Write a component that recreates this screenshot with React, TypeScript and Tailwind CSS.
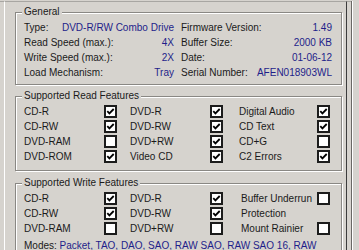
const GENERAL = [
    ["Type:", "DVD-R/RW Combo Drive", "Firmware Version:", "1.49"],
    ["Read Speed (max.):", "4X", "Buffer Size:", "2000 KB"],
    ["Write Speed (max.):", "2X", "Date:", "01-06-12"],
    ["Load Mechanism:", "Tray", "Serial Number:", "AFEN018903WL"],
];

const READ: [string, boolean, string, boolean, string, boolean][] = [
    ["CD-R", true, "DVD-R", true, "Digital Audio", true],
    ["CD-RW", true, "DVD-RW", true, "CD Text", true],
    ["DVD-RAM", false, "DVD+RW", true, "CD+G", false],
    ["DVD-ROM", true, "Video CD", true, "C2 Errors", true],
];

function Check({ on }: { on: boolean }) {
    return (
        <span className="flex h-[13px] w-[13px] items-center justify-center border-2 border-[#1c1c1c] bg-white">
            {on && (
                <svg width="9" height="9" viewBox="0 0 9 9">
                    <polyline points="1.3,4.2 3.4,6.4 7.7,2" fill="none" stroke="#000" strokeWidth="1.8" />
                </svg>
            )}
        </span>
    );
}

function Group({ title, className, children }: { title: string; className?: string; children: React.ReactNode }) {
    return (
        <fieldset
            className={`ml-[10px] w-[327px] border border-[#8a8884] pl-[8px] pt-[1px] shadow-[inset_1px_1px_0_#ffffff,1px_1px_0_#ffffff] ${className ?? ""}`}
        >
            <legend className="ml-[-2px] bg-[#d6d3ce] px-[2px] leading-[14px]">{title}</legend>
            {children}
        </fieldset>
    );
}

export default function App() {
    return (
        <div className="h-[250px] w-[359px] overflow-hidden bg-[#d6d3ce] pt-[1px] text-[10px] text-[#1a1a1a] [font-family:'Liberation_Sans',Arial,sans-serif]">
            <div className="flex h-full">
                <div className="w-[4px] border-t border-[#a8a6a2]" />
                <div className="h-full w-[343px] border-l border-r border-t border-l-white border-r-[#3c3c3c] border-t-[#a8a6a2] pt-[3px]">
                    <Group title="General" className="pb-[4px]">
                        {GENERAL.map(([l1, v1, l2, v2]) => (
                            <div key={l1} className="grid h-[15px] grid-cols-[150px_151px] gap-x-[7px] leading-[15px]">
                                <div className="flex justify-between">
                                    <span>{l1}</span>
                                    <span className="text-[#1e1e8a]">{v1}</span>
                                </div>
                                <div className="flex justify-between">
                                    <span>{l2}</span>
                                    <span className="text-[#1e1e8a]">{v2}</span>
                                </div>
                            </div>
                        ))}
                    </Group>

                    <Group title="Supported Read Features" className="mt-[4px] pb-[6px]">
                        {READ.map((row) => (
                            <div key={row[0]} className="grid h-[15px] grid-cols-[80px_26px_80px_29px_78px_13px] items-center leading-[15px]">
                                <span>{row[0]}</span>
                                <Check on={row[1]} />
                                <span>{row[2]}</span>
                                <Check on={row[3]} />
                                <span>{row[4]}</span>
                                <Check on={row[5]} />
                            </div>
                        ))}
                    </Group>

                    <Group title="Supported Write Features" className="mt-[5px]">
                        <div className="grid grid-cols-[80px_26px_80px_29px_78px_13px] grid-rows-[15px_15px_15px] items-center leading-[15px]">
                            <span>CD-R</span>
                            <Check on />
                            <span>DVD-R</span>
                            <Check on />
                            <span className="row-span-2 self-start pl-[2px] leading-[15px]">
                                Buffer Underrun
                                <br />
                                Protection
                            </span>
                            <Check on={false} />
                            <span>CD-RW</span>
                            <Check on />
                            <span>DVD-RW</span>
                            <Check on />
                            <span />
                            <span>DVD-RAM</span>
                            <Check on={false} />
                            <span>DVD+RW</span>
                            <Check on={false} />
                            <span className="pl-[2px]">Mount Rainier</span>
                            <Check on={false} />
                        </div>
                        <div className="mt-[2px] whitespace-nowrap leading-[15px]">
                            Modes: <span className="text-[#1e1e8a]">Packet, TAO, DAO, SAO, RAW SAO, RAW SAO 16, RAW</span>
                        </div>
                    </Group>
                </div>
                <div className="w-[4px] border-t border-[#a8a6a2]" />
                <div className="h-full w-[2px] border-l border-r border-l-[#6a6864] border-r-white" />
                <div className="flex-1" />
            </div>
        </div>
    );
}
